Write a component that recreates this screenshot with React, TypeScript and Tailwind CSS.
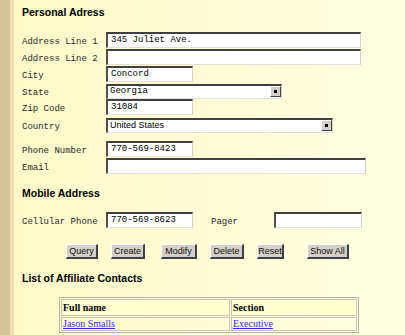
import React from "react";

const mono = { fontFamily: '"Liberation Mono", "Courier New", monospace' };

function Input({ w, value }: { w: string; value?: string }) {
  return (
    <div
      className={`${w} h-[16px] bg-white border-t-2 border-l-2 border-b border-r border-t-[#404040] border-l-[#505050] border-b-[#e4e0d8] border-r-[#d4d0c8] flex items-center pl-[3px] text-[9px] text-black leading-none`}
      style={mono}
    >
      {value}
    </div>
  );
}

function Select({ w, value, sans }: { w: string; value: string; sans?: boolean }) {
  return (
    <div
      className={`${w} h-[15px] bg-white border-t-2 border-l-2 border-b border-r border-t-[#404040] border-l-[#505050] border-b-[#e4e0d8] border-r-[#d4d0c8] flex items-center leading-none`}
    >
      <div
        className="flex-1 pl-[2px] text-[9px] text-black"
        style={sans ? { fontFamily: '"Liberation Sans", Arial, sans-serif' } : mono}
      >
        {value}
      </div>
      <div className="w-[11px] h-[11px] bg-[#d4d0c8] border-t border-l border-b border-r border-t-white border-l-white border-b-[#404040] border-r-[#404040] flex items-center justify-center">
        <div className="w-[3px] h-[3px] bg-black" />
      </div>
    </div>
  );
}

function Label({ children, w = "w-[84px]" }: { children: React.ReactNode; w?: string }) {
  return (
    <div className={`${w} text-[9px] text-[#2a2a2a] leading-none pt-[4px]`} style={mono}>
      {children}
    </div>
  );
}

function Btn({ children, w, ml }: { children: React.ReactNode; w: string; ml: string }) {
  return (
    <div
      className={`${w} ${ml} h-[15px] bg-[#d4d0c8] border-t border-l border-b-2 border-r-2 border-t-white border-l-white border-b-[#404040] border-r-[#404040] flex items-center justify-center text-[9px] text-[#111] leading-none`}
      style={{ fontFamily: '"Liberation Sans", Arial, sans-serif' }}
    >
      {children}
    </div>
  );
}

function Heading({ children, mt }: { children: React.ReactNode; mt: string }) {
  return (
    <div
      className={`${mt} h-[14px] flex items-center text-[10.5px] font-bold text-black leading-none`}
      style={{ fontFamily: '"Liberation Sans", Arial, sans-serif' }}
    >
      {children}
    </div>
  );
}

export default function App() {
  return (
    <div className="w-[405px] h-[335px] overflow-hidden flex bg-[#fffbd0]">
      <div className="w-[10px] h-full bg-[#d6c59b] shrink-0" />
      <div className="w-[4px] h-full bg-[#ede1b3] shrink-0" />
      <div className="flex-1 flex flex-col pl-[8px] pt-[5px] bg-gradient-to-r from-[#fff9c9] via-[#fffcd6] to-[#ffffe2]">
        <Heading mt="mt-0">Personal Adress</Heading>

        <div className="mt-[13px] flex items-center h-[16px]">
          <Label>Address Line 1</Label>
          <Input w="w-[255px]" value="345 Juliet Ave." />
        </div>
        <div className="mt-[1px] flex items-center h-[16px]">
          <Label>Address Line 2</Label>
          <Input w="w-[255px]" />
        </div>
        <div className="mt-[1px] flex items-center h-[16px]">
          <Label>City</Label>
          <Input w="w-[87px]" value="Concord" />
        </div>
        <div className="mt-[1px] flex items-center h-[16px]">
          <Label>State</Label>
          <Select w="w-[176px]" value="Georgia" />
        </div>
        <div className="mt-[0px] flex items-center h-[16px]">
          <Label>Zip Code</Label>
          <Input w="w-[87px]" value="31084" />
        </div>
        <div className="mt-[2px] flex items-center h-[16px]">
          <Label>Country</Label>
          <Select w="w-[227px]" value="United States" sans />
        </div>
        <div className="mt-[8px] flex items-center h-[16px]">
          <Label>Phone Number</Label>
          <Input w="w-[87px]" value="770-569-8423" />
        </div>
        <div className="mt-[1px] flex items-center h-[16px]">
          <Label>Email</Label>
          <Input w="w-[260px]" />
        </div>

        <Heading mt="mt-[12px]">Mobile Address</Heading>

        <div className="mt-[12px] flex items-center h-[16px]">
          <Label>Cellular Phone</Label>
          <Input w="w-[87px]" value="770-569-8623" />
          <Label w="w-[63px] ml-[18px]">Pager</Label>
          <Input w="w-[88px]" />
        </div>

        <div className="mt-[16px] flex items-center h-[15px]">
          <Btn w="w-[32px]" ml="ml-[44px]">Query</Btn>
          <Btn w="w-[34px]" ml="ml-[13px]">Create</Btn>
          <Btn w="w-[36px]" ml="ml-[16px]">Modify</Btn>
          <Btn w="w-[34px]" ml="ml-[13px]">Delete</Btn>
          <Btn w="w-[27px]" ml="ml-[13px]">Reset</Btn>
          <Btn w="w-[42px]" ml="ml-[23px]">Show All</Btn>
        </div>

        <Heading mt="mt-[12px]">List of Affiliate Contacts</Heading>

        <div
          className="mt-[12px] ml-[37px] w-[300px] border border-[#b8b4a8] p-[1px] text-[10px] leading-none"
          style={{ fontFamily: '"Liberation Serif", "Times New Roman", serif' }}
        >
          <div className="flex h-[17px]">
            <div className="w-[169px] border border-[#c8c4b8] bg-[#ffffd2] flex items-center pl-[1px] font-bold text-black">
              Full name
            </div>
            <div className="flex-1 ml-[1px] border border-[#c8c4b8] bg-[#ffffd2] flex items-center pl-[1px] font-bold text-black">
              Section
            </div>
          </div>
          <div className="flex h-[14px] mt-[1px]">
            <div className="w-[169px] border border-[#c8c4b8] flex items-center pl-[1px]">
              <span className="text-[#3333cc] underline">Jason Smalls</span>
            </div>
            <div className="flex-1 ml-[1px] border border-[#c8c4b8] flex items-center pl-[1px]">
              <span className="text-[#3333cc] underline">Executive</span>
            </div>
          </div>
        </div>
      </div>
    </div>
  );
}
